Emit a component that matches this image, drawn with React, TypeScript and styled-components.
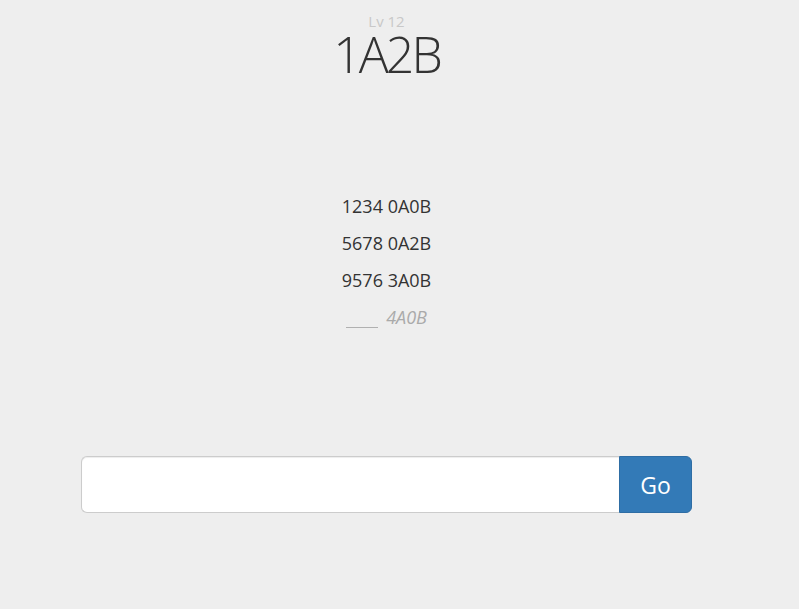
import React from "react";
import styled, { createGlobalStyle } from "styled-components";

const Global = createGlobalStyle`
  html, body { margin: 0; padding: 0; background: #eeeeee; }
  body { font-family: "Open Sans", "Segoe UI", sans-serif; color: #333; }
`;

const Page = styled.div`
  width: 611px;
  margin-left: 81px;
  display: flex;
  flex-direction: column;
  align-items: center;
`;

const Level = styled.div`
  margin-top: 12px;
  font-size: 15px;
  line-height: 18px;
  color: #c8c8c8;
`;

const Title = styled.h1`
  margin: 0;
  font-size: 50px;
  font-weight: 300;
  line-height: 48px;
  letter-spacing: -3px;
  color: #333;
`;

const History = styled.div`
  margin-top: 110px;
  display: flex;
  flex-direction: column;
  align-items: center;
`;

const Row = styled.div`
  font-size: 18px;
  line-height: 37px;
  color: #333;
  display: flex;
  align-items: baseline;
  gap: 8px;
`;

const Blank = styled.span`
  display: inline-block;
  width: 32px;
  border-bottom: 1px solid #b0b0b0;
  transform: translateY(4px);
`;

const Hint = styled.span`
  font-style: italic;
  color: #aaa;
`;

const Form = styled.form`
  margin-top: 120px;
  width: 100%;
  display: flex;
`;

const Input = styled.input`
  flex: 1;
  height: 57px;
  box-sizing: border-box;
  border: 1px solid #ccc;
  border-right: none;
  border-radius: 6px 0 0 6px;
  background: #fff;
  box-shadow: inset 0 1px 1px rgba(0, 0, 0, 0.075);
  font-size: 20px;
  padding: 0 16px;
  outline: none;
`;

const Button = styled.button`
  width: 73px;
  height: 57px;
  box-sizing: border-box;
  border: 1px solid #2e6da4;
  border-radius: 0 6px 6px 0;
  background: #337ab7;
  color: #fff;
  font-family: "Open Sans", "Segoe UI", sans-serif;
  font-size: 23px;
  cursor: pointer;
`;

export default function App() {
  return (
    <>
      <Global />
      <Page>
        <Level>Lv 12</Level>
        <Title>1A2B</Title>
        <History>
          <Row>1234 0A0B</Row>
          <Row>5678 0A2B</Row>
          <Row>9576 3A0B</Row>
          <Row>
            <Blank />
            <Hint>4A0B</Hint>
          </Row>
        </History>
        <Form onSubmit={(e) => e.preventDefault()}>
          <Input type="text" />
          <Button type="submit">Go</Button>
        </Form>
      </Page>
    </>
  );
}
